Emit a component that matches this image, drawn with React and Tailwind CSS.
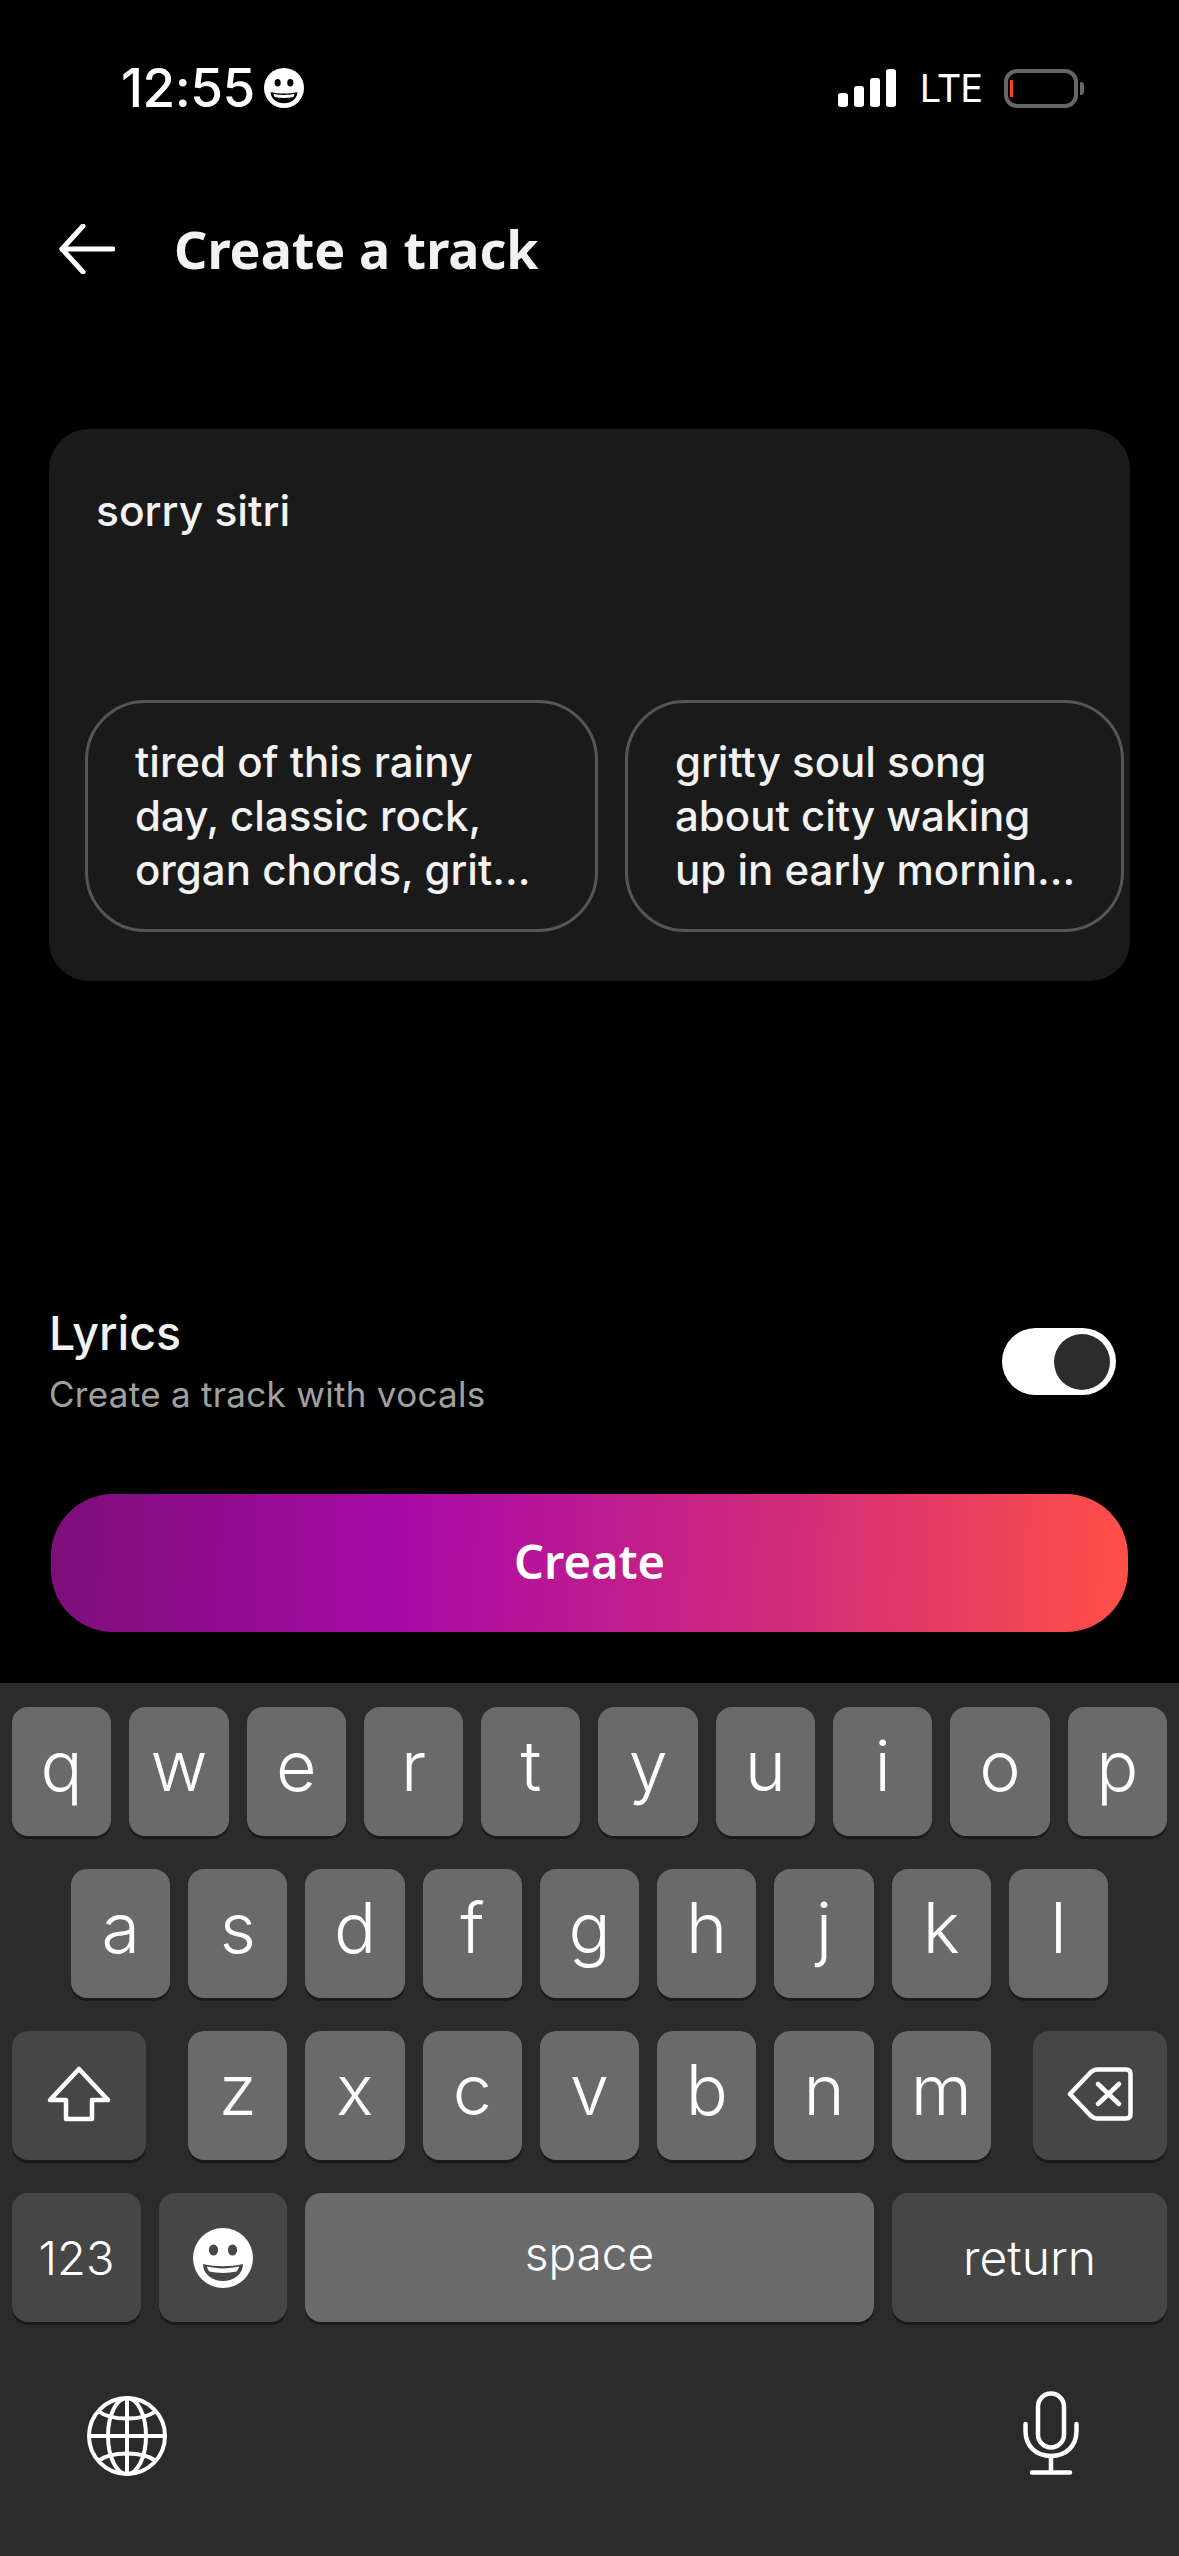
const KEY_LIGHT = 'bg-[#6a6a6a]'
const KEY_DARK = 'bg-[#464646]'

function Smiley({ size, bg }) {
  return (
    <svg width={size} height={size} viewBox="0 0 60 60">
      <ellipse cx="30" cy="30" rx="30" ry="30" fill="#fff" />
      <ellipse cx="20.5" cy="22" rx="4.6" ry="5.6" fill={bg} />
      <ellipse cx="39.5" cy="22" rx="4.6" ry="5.6" fill={bg} />
      <path d="M10 36 C22 39 38 39 50 36 C50 46 41 53 30 53 C19 53 10 46 10 36 Z" fill={bg} />
      <path d="M14 38.6 C24 41 36 41 46 38.6 C45.4 41 44.6 42.4 43.6 43.6 C35 45.4 25 45.4 16.4 43.6 C15.4 42.4 14.6 41 14 38.6 Z" fill="#fff" />
    </svg>
  )
}

function StatusBar() {
  return (
    <div className="flex items-center justify-between h-[40px] mt-[68px] pl-[121px] pr-[101px] text-white">
      <div className="flex items-center gap-[9px]">
        <span className="font-['Inter'] font-medium text-[53px] leading-none tracking-[-0.5px]">12:55</span>
        <Smiley size={40} bg="#000" />
      </div>
      <div className="flex items-center">
        <svg width="58" height="38" viewBox="0 0 58 38" fill="#fff">
          <rect x="0" y="24" width="10" height="14" rx="3" />
          <rect x="16" y="17" width="10" height="21" rx="3" />
          <rect x="32" y="9" width="10" height="29" rx="3" />
          <rect x="48" y="0" width="10" height="38" rx="3" />
        </svg>
        <span className="ml-[24px] font-['Inter'] font-normal text-[38px] leading-none tracking-[-1px]">LTE</span>
        <div className="ml-[22px] relative w-[74px] h-[39px] rounded-[13px] border-[4px] border-[#666666]">
          <div className="absolute left-[2px] top-[7px] w-[3px] h-[17px] bg-[#ff3b30]" />
          <div className="absolute right-[-10px] top-[9px] w-[4px] h-[13px] rounded-r-[3px] bg-[#666666]" />
        </div>
      </div>
    </div>
  )
}

function Header() {
  return (
    <div className="flex items-center h-[60px] mt-[111px] pl-[59px] text-[#f2f2f2]">
      <svg width="56" height="50" viewBox="0 0 56 50" fill="none" stroke="#fff" strokeWidth="5" strokeLinecap="round" strokeLinejoin="round">
        <path d="M54 25 H3" />
        <path d="M24 2 L3 25 L24 48" />
      </svg>
      <h1 className="ml-[59px] font-['Noto_Sans'] font-bold text-[52px] leading-none">Create a track</h1>
    </div>
  )
}

function Chip({ lines, className }) {
  return (
    <div className={`shrink-0 h-[232px] rounded-[60px] border-[3px] border-[#555555] flex flex-col justify-center pl-[47px] text-[42px] leading-[54px] font-medium text-[#f2f2f2] ${className}`}>
      {lines.map((l) => (
        <div key={l} className="whitespace-nowrap">{l}</div>
      ))}
    </div>
  )
}

function PromptCard() {
  return (
    <div className="mt-[150px] ml-[49px] w-[1081px] h-[552px] rounded-[40px] bg-[#1a1a1a] flex flex-col justify-between font-['Inter'] pt-[57px] pb-[49px] overflow-hidden">
      <div className="pl-[47px] text-[42.5px] leading-[50px] font-medium text-[#f2f2f2]">sorry sitri</div>
      <div className="flex gap-[27px] pl-[36px]">
        <Chip className="w-[513px]" lines={['tired of this rainy', 'day, classic rock,', 'organ chords, grit...']} />
        <Chip className="w-[499px]" lines={['gritty soul song', 'about city waking', 'up in early mornin...']} />
      </div>
    </div>
  )
}

function LyricsRow() {
  return (
    <div className="mt-[324px] ml-[49px] w-[1067px] flex items-start justify-between font-['Inter']">
      <div>
        <div className="text-[46.5px] leading-[56px] font-medium text-[#f2f2f2]">Lyrics</div>
        <div className="mt-[11px] text-[35px] leading-[44px] text-[#a0a0a0] tracking-[0.3px]">Create a track with vocals</div>
      </div>
      <div className="mt-[23px] w-[114px] h-[67px] rounded-full bg-white flex items-center justify-end pr-[6px]">
        <div className="w-[56px] h-[56px] rounded-full bg-[#2c2c2c]" />
      </div>
    </div>
  )
}

function CreateButton() {
  return (
    <div className="mt-[78px] ml-[51px] w-[1077px] h-[138px] rounded-[62px] bg-[linear-gradient(92deg,#7c0f7a_0%,#a80aa6_33%,#d42d78_70%,#ff5047_100%)] flex items-center justify-center">
      <span className="font-['Noto_Sans'] font-semibold text-[47px] leading-none text-white mb-[3px]">Create</span>
    </div>
  )
}

function Key({ children, dark, className = '', labelClass = 'text-[70px] font-light pb-[12px]' }) {
  return (
    <div className={`h-[129px] rounded-[16px] shadow-[0_3px_0_#1a1a1a] flex items-center justify-center text-white leading-none ${dark ? KEY_DARK : KEY_LIGHT} ${labelClass} ${className}`}>
      {children}
    </div>
  )
}

function Keyboard() {
  return (
    <div className="mt-[51px] flex-1 bg-[#2b2b2b] pt-[24px] font-['Inter'] flex flex-col">
      <div className="flex gap-[18px] px-[12px]">
        {'qwertyuiop'.split('').map((k) => (
          <Key key={k} className="flex-1">{k}</Key>
        ))}
      </div>
      <div className="flex gap-[18px] px-[71px] mt-[33px]">
        {'asdfghjkl'.split('').map((k) => (
          <Key key={k} className="flex-1">{k}</Key>
        ))}
      </div>
      <div className="flex px-[12px] mt-[33px]">
        <Key dark className="w-[134px]" labelClass="pb-[4px]">
          <svg width="64" height="56" viewBox="0 0 64 56" fill="none" stroke="#fff" strokeWidth="4.5" strokeLinejoin="round">
            <path d="M32 3 L61 34 H45 V53 H19 V34 H3 Z" />
          </svg>
        </Key>
        <div className="flex flex-1 gap-[18px] mx-[42px]">
          {'zxcvbnm'.split('').map((k) => (
            <Key key={k} className="flex-1">{k}</Key>
          ))}
        </div>
        <Key dark className="w-[134px]" labelClass="pb-[4px]">
          <svg width="66" height="54" viewBox="0 0 66 54" fill="none" stroke="#fff" strokeWidth="4.5" strokeLinejoin="round" strokeLinecap="round">
            <path d="M3 27 L24 5 Q27 2.5 30 2.5 H59 Q63.5 2.5 63.5 7 V47 Q63.5 51.5 59 51.5 H30 Q27 51.5 24 49 Z" />
            <path d="M31 17 L52 37 M52 17 L31 37" />
          </svg>
        </Key>
      </div>
      <div className="flex gap-[18px] px-[12px] mt-[33px]">
        <Key dark className="w-[129px]" labelClass="text-[47px] font-light">123</Key>
        <Key dark className="w-[128px]" labelClass="">
          <Smiley size={60} bg="#464646" />
        </Key>
        <Key className="flex-1" labelClass="text-[46px] font-light pb-[10px]">space</Key>
        <Key dark className="w-[275px]" labelClass="text-[48px] font-light">return</Key>
      </div>
      <div className="flex items-start justify-between mt-[69px] pl-[87px] pr-[100px]">
        <svg className="mt-[5px]" width="80" height="80" viewBox="0 0 80 80" fill="none" stroke="#fff" strokeWidth="4">
          <circle cx="40" cy="40" r="38" />
          <ellipse cx="40" cy="40" rx="19" ry="38" />
          <path d="M40 2 V78 M2 40 H78" />
          <path d="M11 15 C24 25 56 25 69 15 M11 65 C24 55 56 55 69 65" />
        </svg>
        <svg width="56" height="84" viewBox="0 0 56 84" fill="none" stroke="#fff" strokeWidth="4.5" strokeLinecap="round">
          <rect x="15" y="2.5" width="26" height="54" rx="13" />
          <path d="M2.5 33 V40 C2.5 55 13 65 28 65 C43 65 53.5 55 53.5 40 V33" />
          <path d="M28 65 V81 M9 81.5 H47" />
        </svg>
      </div>
    </div>
  )
}

export default function App() {
  return (
    <div className="w-[1179px] h-[2556px] bg-black flex flex-col overflow-hidden">
      <StatusBar />
      <Header />
      <PromptCard />
      <LyricsRow />
      <CreateButton />
      <Keyboard />
    </div>
  )
}
